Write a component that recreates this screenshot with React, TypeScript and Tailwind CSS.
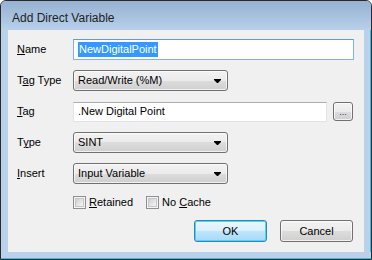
const btnFace =
  "bg-[linear-gradient(to_bottom,#f2f2f2_0%,#ebebeb_50%,#dddddd_50%,#cfcfcf_100%)]";

function Combo({ value }: { value: string }) {
  return (
    <div
      className={`flex h-[21px] w-[155px] items-center justify-between rounded-[3px] border border-[#707070] pl-[4px] pr-[6px] shadow-[inset_0_0_0_1px_rgba(255,255,255,0.7)] ${btnFace}`}
    >
      <span>{value}</span>
      <svg width="7" height="4" viewBox="0 0 7 4">
        <path d="M0 0h7v1L4 4H3L0 1z" fill="#000" />
      </svg>
    </div>
  );
}

function Check({ label, uIndex }: { label: string; uIndex: number }) {
  return (
    <div className="flex items-center gap-[3px]">
      <div className="flex h-[13px] w-[13px] items-center justify-center border border-[#8e8f8f] bg-[#f4f4f4]">
        <div className="h-[9px] w-[9px] border border-[#c6c6c6] bg-[linear-gradient(135deg,#cbcfd5,#f6f6f6)]" />
      </div>
      <span>
        {label.slice(0, uIndex)}
        <span className="underline">{label[uIndex]}</span>
        {label.slice(uIndex + 1)}
      </span>
    </div>
  );
}

export default function App() {
  return (
    <div className="h-[260px] w-[372px] bg-white font-['Liberation_Sans',Arial,sans-serif] text-[11px] text-black">
      <div className="flex h-full w-full flex-col rounded-t-[6px] border border-[#2a2a2a] bg-[#b9d1ea]">
        {/* Title bar */}
        <div className="h-[29px] rounded-t-[5px] bg-[linear-gradient(to_bottom,#97b2d2,#a9c3e0_60%,#b9d1ea)] pl-[11px] pt-[10px] text-[12px] leading-[14px] text-[#1e1e1e]">
          Add Direct Variable
        </div>

        <div className="flex flex-1">
          <div className="w-[7px]" />
          {/* Client area */}
          <div className="flex h-[222px] w-[356px] flex-col bg-[#f0f0f0] pl-[9px] pt-[9px]">
            <div className="flex flex-col gap-[10px]">
              <div className="flex h-[21px] items-center">
                <label className="w-[56px]">
                  <span className="underline">N</span>ame
                </label>
                <div className="flex h-[21px] w-[281px] items-center border border-[#7eb4ea] border-t-[#569de5] pl-[4px] bg-white">
                  <span className="bg-[#3399ff] px-[1px] leading-[15px] text-white">NewDigitalPoint</span>
                </div>
              </div>

              <div className="flex h-[21px] items-center">
                <label className="w-[56px]">
                  T<span className="underline">a</span>g Type
                </label>
                <Combo value="Read/Write (%M)" />
              </div>

              <div className="flex h-[21px] items-center">
                <label className="w-[56px]">
                  <span className="underline">T</span>ag
                </label>
                <div className="flex h-[20px] w-[254px] items-center border border-[#e2e3ea] border-t-[#abadb3] bg-white pl-[4px]">
                  .New Digital Point
                </div>
                <div
                  className={`ml-[6px] flex h-[19px] w-[20px] items-end justify-center rounded-[3px] border border-[#707070] pb-[3px] text-[9px] leading-[9px] text-[#2a2a6a] shadow-[inset_0_0_0_1px_rgba(255,255,255,0.7)] ${btnFace}`}
                >
                  ...
                </div>
              </div>

              <div className="flex h-[21px] items-center">
                <label className="w-[56px]">
                  T<span className="underline">y</span>pe
                </label>
                <Combo value="SINT" />
              </div>

              <div className="flex h-[21px] items-center">
                <label className="w-[56px]">
                  <span className="underline">I</span>nsert
                </label>
                <Combo value="Input Variable" />
              </div>
            </div>

            <div className="mt-[12px] flex h-[13px] items-center gap-[13px] pl-[56px]">
              <Check label="Retained" uIndex={0} />
              <Check label="No Cache" uIndex={3} />
            </div>

            <div className="mt-[11px] flex justify-end gap-[13px] pr-[11px]">
              <div className="flex h-[22px] w-[73px] items-center justify-center rounded-[3px] border border-[#3c7fb1] bg-[linear-gradient(to_bottom,#eaf6fd_0%,#d9f0fc_50%,#bee6fd_50%,#a7d9f5_100%)] shadow-[inset_0_0_0_1px_#48d8fb]">
                OK
              </div>
              <div
                className={`flex h-[22px] w-[73px] items-center justify-center rounded-[3px] border border-[#707070] shadow-[inset_0_0_0_1px_rgba(255,255,255,0.7)] ${btnFace}`}
              >
                Cancel
              </div>
            </div>
          </div>
          <div className="w-[6px]" />
          <div className="w-[1px] bg-[#28c4e6]" />
        </div>
        <div className="h-[6px]" />
        <div className="h-[1px] bg-[#28c4e6]" />
      </div>
    </div>
  );
}
